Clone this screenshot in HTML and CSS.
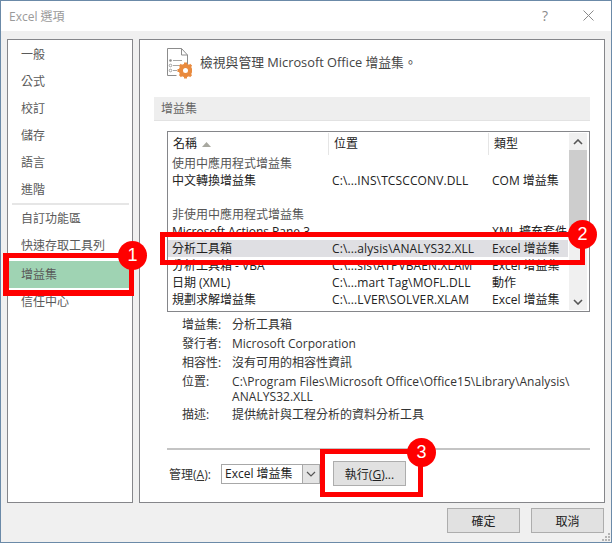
FILE: index.html
```html
<!DOCTYPE html>
<html lang="zh-Hant">
<head>
<meta charset="utf-8">
<title>Excel 選項</title>
<link rel="stylesheet" href="styles.css">
</head>
<body>
<div class="window">
  <header class="titlebar">
    <span class="title">Excel 選項</span>
    <span class="help">?</span>
    <svg class="close" width="11" height="11" viewBox="0 0 11 11"><path d="M.5.5l10 10M10.5.5l-10 10" stroke="#8a8a8a" fill="none"/></svg>
  </header>
  <div class="content">
    <nav class="nav">
      <div class="nav-item">一般</div>
      <div class="nav-item">公式</div>
      <div class="nav-item">校訂</div>
      <div class="nav-item">儲存</div>
      <div class="nav-item">語言</div>
      <div class="nav-item">進階</div>
      <div class="nav-sep"></div>
      <div class="nav-item">自訂功能區</div>
      <div class="nav-item">快速存取工具列</div>
      <div class="nav-item selected">增益集</div>
      <div class="nav-item">信任中心</div>
    </nav>
    <main class="pane">
      <div class="heading">
        <svg class="heading-icon" width="26" height="32" viewBox="0 0 26 32">
          <path d="M1.5 1.5h14l6 6.500v13M15.500 1.500v6.500h6M1.500 1.500v27h9" fill="none" stroke="#8c8c8c"/>
          <path d="M7 13.500h9M7 18.500h6M7 23.500h4" stroke="#a6a6a6" fill="none"/>
          <circle cx="4.500" cy="13.500" r="1.300" fill="#8c8c8c"/>
          <circle cx="4.500" cy="18.500" r="1.300" fill="none" stroke="#8c8c8c" stroke-width=".8"/>
          <circle cx="4.500" cy="23.500" r="1.300" fill="none" stroke="#8c8c8c" stroke-width=".8"/>
          <circle cx="19.500" cy="23.500" r="4.600" fill="none" stroke="#e98b3f" stroke-width="4.200"/>
          <path d="M19.500 15.500v16M11.500 23.500h16M13.800 17.800l11.400 11.400M25.200 17.800L13.800 29.200" stroke="#e98b3f" stroke-width="3" fill="none" stroke-dasharray="3.200 9.600"/>
        </svg>
        <span class="heading-text">檢視與管理 Microsoft Office 增益集。</span>
      </div>
      <div class="band">增益集</div>
      <div class="table">
        <div class="table-main">
          <div class="thead">
            <div class="th">名稱<svg class="sort" width="9" height="5" viewBox="0 0 9 5"><path d="M4.500 0L9 5H0z" fill="#a8a8a0"/></svg></div>
            <div class="th">位置</div>
            <div class="th">類型</div>
          </div>
          <div class="tr"><div class="group">使用中應用程式增益集</div></div>
          <div class="tr"><div>中文轉換增益集</div><div class="loc">C:\...INS\TCSCCONV.DLL</div><div>COM 增益集</div></div>
          <div class="tr"></div>
          <div class="tr"><div class="group">非使用中應用程式增益集</div></div>
          <div class="tr"><div>Microsoft Actions Pane 3</div><div class="loc"></div><div>XML 擴充套件</div></div>
          <div class="tr current"><div>分析工具箱</div><div class="loc">C:\...alysis\ANALYS32.XLL</div><div>Excel 增益集</div></div>
          <div class="tr"><div>分析工具箱 - VBA</div><div class="loc">C:\...sis\ATPVBAEN.XLAM</div><div>Excel 增益集</div></div>
          <div class="tr"><div>日期 (XML)</div><div class="loc">C:\...mart Tag\MOFL.DLL</div><div>動作</div></div>
          <div class="tr"><div>規劃求解增益集</div><div class="loc">C:\...LVER\SOLVER.XLAM</div><div>Excel 增益集</div></div>
        </div>
        <div class="scrollbar">
          <div class="sb-btn"><svg width="10" height="6" viewBox="0 0 10 6"><path d="M1 5l4-4 4 4" fill="none" stroke="#555" stroke-width="1.600"/></svg></div>
          <div class="sb-thumb"></div>
          <div class="sb-track"></div>
          <div class="sb-btn"><svg width="10" height="6" viewBox="0 0 10 6"><path d="M1 1l4 4 4-4" fill="none" stroke="#555" stroke-width="1.600"/></svg></div>
        </div>
      </div>
      <div class="details">
        <div class="d-row"><span>增益集:</span><span>分析工具箱</span></div>
        <div class="d-row"><span>發行者:</span><span>Microsoft Corporation</span></div>
        <div class="d-row"><span>相容性:</span><span>沒有可用的相容性資訊</span></div>
        <div class="d-row d-path"><span>位置:</span><span class="path-value">C:\Program Files\Microsoft Office\Office15\Library\Analysis\<br>ANALYS32.XLL</span></div>
        <div class="d-row"><span>描述:</span><span>提供統計與工程分析的資料分析工具</span></div>
      </div>
      <div class="divider"></div>
      <div class="manage">
        <span class="manage-label">管理(<u>A</u>):</span>
        <div class="select">
          <span class="select-text">Excel 增益集</span>
          <span class="select-arrow"><svg width="10" height="6" viewBox="0 0 10 6"><path d="M1 1l4 4 4-4" fill="none" stroke="#555" stroke-width="1.200"/></svg></span>
        </div>
        <button class="btn go">執行(<u>G</u>)...</button>
      </div>
    </main>
  </div>
  <footer class="footer">
    <button class="btn">確定</button>
    <button class="btn">取消</button>
  </footer>
  <svg class="grip" width="10" height="8" viewBox="0 0 10 8"><path d="M7 0h2v2H7zM4 3h2v2H4zM7 3h2v2H7zM1 6h2v2H1zM4 6h2v2H4zM7 6h2v2H7z" fill="#b4b4b4"/></svg>
  <div class="mark mark-1"></div>
  <div class="mark mark-2"></div>
  <div class="mark mark-3"></div>
  <div class="badge badge-1">1</div>
  <div class="badge badge-2">2</div>
  <div class="badge badge-3">3</div>
</div>
</body>
</html>
```
FILE: styles.css
```css
* { box-sizing: border-box; }
html, body { margin: 0; padding: 0; }
body {
  width: 612px;
  height: 543px;
  overflow: hidden;
  font-family: "Open Sans", "Noto Sans CJK TC", sans-serif;
  font-size: 12px;
  color: #2b2b2b;
}
.window {
  position: relative;
  width: 612px;
  height: 543px;
  border: 1px solid #6b8aa8;
  background: #f0f0f0;
  display: flex;
  flex-direction: column;
}
.titlebar {
  height: 30px;
  flex: none;
  background: #fff;
  display: flex;
  align-items: center;
  padding: 0 17px 1px 8px;
}
.title { font-size: 12px; color: #9a9a9a; flex: 1; }
.help { font-size: 14px; color: #8a8a8a; margin-right: 35px; }
.content {
  flex: none;
  height: 464px;
  margin-top: 8px;
  padding: 0 6px;
  display: flex;
  gap: 6px;
}
.nav {
  width: 126px;
  background: #fff;
  border: 1px solid #85868a;
  padding-top: 1px;
}
.nav-item {
  height: 27px;
  line-height: 27px;
  margin-right: 2px;
  padding-left: 13px;
  color: #5a5a5a;
}
.nav-item.selected { background: #9fd3b3; margin-top: 2px; }
.nav-sep { height: 2px; margin: 0 3px 0 4px; background: #e6e6e6; }
.pane {
  width: 466px;
  background: #fff;
  border: 1px solid #85868a;
  padding: 0 14px;
}
.heading {
  height: 57px;
  display: flex;
  align-items: flex-start;
  padding: 7px 0 0 12px;
}
.heading-icon { flex: none; }
.heading-text {
  margin: 6px 0 0 8px;
  font-size: 12.800px;
  line-height: 18px;
  color: #444;
}
.band {
  height: 24px;
  line-height: 23px;
  padding-left: 7px;
  background: #eeeeee;
  border-bottom: 1px solid #e2e2e2;
  color: #666;
}
.table {
  margin: 10px 0 0 13px;
  height: 181px;
  border: 1px solid #85868a;
  display: flex;
}
.table-main { flex: 1; min-width: 0; padding-top: 1px; }
.thead {
  display: grid;
  grid-template-columns: 161px 160px 83px;
  height: 22px;
}
.th {
  line-height: 22px;
  padding-left: 5px;
  border-right: 1px solid #e5e5e5;
  color: #222;
  display: flex;
  align-items: center;
  gap: 5px;
}
.tr {
  display: grid;
  grid-template-columns: 161px 160px 83px;
  height: 17px;
  line-height: 17px;
  white-space: nowrap;
  color: #222;
}
.tr > div { padding-left: 3px; overflow: hidden; }
.tr > div:first-child { padding-left: 4px; }
.tr > .loc { letter-spacing: .12px; }
.tr .group { color: #555; }
.tr.current { background: #dfdfe3; }
.scrollbar {
  width: 19px;
  flex: none;
  margin: 1px 2px 0 0;
  padding: 0 0 1px 1px;
  display: flex;
  flex-direction: column;
  background: #fff;
}
.sb-btn {
  height: 17px;
  flex: none;
  background: #f0f0f0;
  display: flex;
  align-items: center;
  justify-content: center;
}
.sb-thumb { height: 78px; flex: none; background: #cdcdcd; }
.sb-track { flex: 1; background: #f0f0f0; }
.details { margin: 3px 0 0 28px; color: #333; }
.d-row {
  display: grid;
  grid-template-columns: 50px 1fr;
  line-height: 19px;
  white-space: nowrap;
}
.d-path { line-height: 15px; padding: 2px 0 1px; }
.path-value { letter-spacing: .07px; }
.divider {
  margin: 24px 0 0 13px;
  height: 2px;
  background: #c4c4c4;
}
.manage {
  display: flex;
  align-items: center;
  margin: 11px 0 0 15px;
  height: 25px;
}
.manage-label { width: 52px; color: #333; flex: none; }
.select {
  width: 99px;
  height: 20px;
  flex: none;
  border: 1px solid #a8a8a8;
  display: flex;
  background: #fff;
}
.select-text { flex: 1; line-height: 18px; padding-left: 3px; color: #222; }
.select-arrow {
  width: 17px;
  background: #e4e4e4;
  border-left: 1px solid #a8a8a8;
  display: flex;
  align-items: center;
  justify-content: center;
}
.btn {
  width: 73px;
  height: 25px;
  padding: 0;
  font: inherit;
  color: #222;
  background: #e1e1e1;
  border: 1px solid #adadad;
}
.go { margin-left: 13px; }
.footer {
  flex: 1;
  display: flex;
  justify-content: flex-end;
  gap: 11px;
  padding: 5px 7px 0 0;
}
.grip { position: absolute; right: 0; bottom: 1px; }
.mark { position: absolute; border: 5px solid #ff0000; }
.mark-1 { left: 2px; top: 252px; width: 131px; height: 43px; border-left-width: 6px; border-bottom-width: 6px; }
.mark-2 { left: 159px; top: 231px; width: 425px; height: 33px; }
.mark-3 { left: 319px; top: 448px; width: 103px; height: 48px; }
.badge {
  position: absolute;
  width: 29px;
  height: 29px;
  border-radius: 50%;
  background: #ff0000;
  color: #fff;
  font-family: "Liberation Sans", sans-serif;
  font-size: 18px;
  line-height: 29px;
  text-align: center;
}
.badge-1 { left: 117px; top: 240px; }
.badge-2 { left: 567px; top: 219px; }
.badge-3 { left: 406px; top: 437px; }
```
